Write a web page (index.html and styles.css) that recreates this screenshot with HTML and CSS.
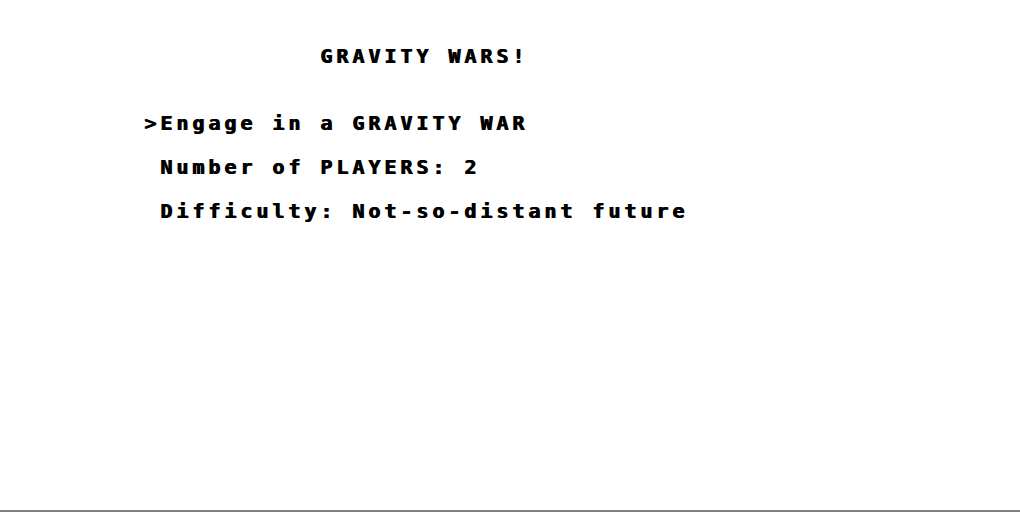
FILE: index.html
```html
<!DOCTYPE html>
<html lang="en">
<head>
<meta charset="utf-8">
<title>GRAVITY WARS!</title>
<link rel="stylesheet" href="styles.css">
</head>
<body>
<div class="screen">
  <main class="content">
    <h1 class="title">GRAVITY WARS!</h1>
    <ul class="menu">
      <li class="item"><span class="cursor">&gt;</span>Engage in a GRAVITY WAR</li>
      <li class="item"><span class="cursor"></span>Number of PLAYERS: 2</li>
      <li class="item"><span class="cursor"></span>Difficulty: Not-so-distant future</li>
    </ul>
  </main>
  <div class="bar"></div>
</div>
</body>
</html>
```
FILE: styles.css
```css
html, body {
  margin: 0;
  padding: 0;
  background: #ffffff;
}
.screen {
  width: 1020px;
  height: 512px;
  display: flex;
  flex-direction: column;
}
.content {
  flex: 1;
  font-family: "DejaVu Sans Mono", monospace;
  font-weight: bold;
  font-size: 20px;
  letter-spacing: 3.96px;
  line-height: 16px;
  color: #000000;
  text-shadow: 1px 0 0 #000000;
  padding-top: 48px;
}
.title {
  margin: 0;
  font: inherit;
  padding-left: 320px;
}
.menu {
  list-style: none;
  margin: 0;
  padding: 51px 0 0 144px;
  display: flex;
  flex-direction: column;
  gap: 28px;
}
.item {
  white-space: pre;
}
.cursor {
  display: inline-block;
  width: 16px;
}
.bar {
  height: 2px;
  background: #808080;
}
```
